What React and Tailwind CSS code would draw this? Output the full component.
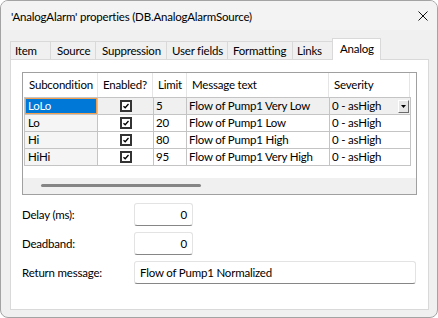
import React from "react";

const rows = [
  { sub: "LoLo", limit: "5", msg: "Flow of Pump1 Very Low" },
  { sub: "Lo", limit: "20", msg: "Flow of Pump1 Low" },
  { sub: "Hi", limit: "80", msg: "Flow of Pump1 High" },
  { sub: "HiHi", limit: "95", msg: "Flow of Pump1 Very High" },
];

function Check() {
  return (
    <div className="flex h-[12px] w-[12px] items-center justify-center border-2 border-[#333333] bg-white">
      <svg width="8" height="8" viewBox="0 0 8 8">
        <path d="M1.5 4.2 L3.2 5.8 L6.5 2" fill="none" stroke="#000" strokeWidth="1.3" />
      </svg>
    </div>
  );
}

function Tab({ label, w, pl }) {
  return (
    <div
      className={`h-[18px] border-l border-t border-[#d9d9d9] bg-[#f0f0f0] leading-[17px] whitespace-nowrap ${w} ${pl}`}
    >
      {label}
    </div>
  );
}

export default function App() {
  return (
    <div className="h-[318px] w-[438px] bg-white font-['Lato',sans-serif] text-[11.5px] tracking-[-0.2px] text-black">
      <div className="flex h-[318px] w-[438px] flex-col overflow-hidden rounded-[8px] border border-[#a3a3a3] bg-[#f0f0f0]">
        {/* title bar */}
        <div className="flex h-[29px] shrink-0 items-center justify-between bg-[#f3f3f3] pl-[10px] pr-[9px] pt-[2px]">
          <span className="whitespace-nowrap">'AnalogAlarm' properties (DB.AnalogAlarmSource)</span>
          <svg width="10" height="10" viewBox="0 0 10 10" className="mb-[2px]">
            <path d="M0.5 0.5 L9.5 9.5 M9.5 0.5 L0.5 9.5" stroke="#111" strokeWidth="1" />
          </svg>
        </div>

        <div className="flex flex-col pl-[9px] pt-[8px]">
          {/* tabs */}
          <div className="flex h-[21px] items-end">
            <Tab label="Item" w="w-[40px]" pl="pl-[4px]" />
            <Tab label="Source" w="w-[45px]" pl="pl-[6px]" />
            <Tab label="Suppression" w="w-[71px]" pl="pl-[6px]" />
            <Tab label="User fields" w="w-[61px]" pl="pl-[5px]" />
            <Tab label="Formatting" w="w-[65px]" pl="pl-[5px]" />
            <Tab label="Links" w="w-[40px]" pl="pl-[4px]" />
            <div className="relative z-10 -mb-[1px] h-[22px] w-[49px] border border-b-0 border-[#d9d9d9] bg-white pl-[7px] leading-[19px]">
              Analog
            </div>
          </div>

          {/* panel */}
          <div className="h-[251px] w-[419px] border border-[#d9d9d9] bg-white pl-[11px] pt-[12px]">
            {/* grid */}
            <div className="flex h-[123px] w-[395px] flex-col border border-[#a0a0a0] bg-white">
              <div className="flex h-[24px] shrink-0 items-center">
                <div className="flex h-full w-[75px] items-center border-r border-[#e5e5e5] pl-[6px]">Subcondition</div>
                <div className="flex h-full w-[55px] items-center border-r border-[#e5e5e5] pl-[5px]">Enabled?</div>
                <div className="flex h-full w-[34px] items-center border-r border-[#e5e5e5] pl-[5px]">Limit</div>
                <div className="flex h-full w-[142px] items-center border-r border-[#e5e5e5] pl-[5px]">Message text</div>
                <div className="flex h-full w-[81px] items-center border-r border-[#e5e5e5] pl-[5px]">Severity</div>
              </div>
              <div className="ml-[1px] w-[387px] border-l border-t border-[#c4c4c4]">
                {rows.map((r, i) => {
                  const sel = i === 0;
                  const rowBg = sel ? "bg-[#f0f0f0]" : "bg-white";
                  return (
                    <div key={r.sub} className="flex h-[17px]">
                      {sel ? (
                        <div className="flex h-[17px] w-[73px] items-center border-b border-r border-[#c4c4c4] bg-[#f0f0f0]">
                          <div className="flex h-[16px] w-[72px] items-center border border-[#f0a050] bg-[#0078d7] pl-[2px] text-white">
                            {r.sub}
                          </div>
                        </div>
                      ) : (
                        <div className="flex h-[17px] w-[73px] items-center border-b border-r border-[#c4c4c4] bg-[#f5f5f5] pl-[3px]">
                          {r.sub}
                        </div>
                      )}
                      <div className={`flex h-[17px] w-[56px] items-center justify-center border-b border-r border-[#c4c4c4] ${rowBg}`}>
                        <Check />
                      </div>
                      <div className={`flex h-[17px] w-[33px] items-center border-b border-r border-[#c4c4c4] pl-[2px] ${rowBg}`}>
                        {r.limit}
                      </div>
                      <div className={`flex h-[17px] w-[143px] items-center border-b border-r border-[#c4c4c4] pl-[2px] whitespace-nowrap ${rowBg}`}>
                        {r.msg}
                      </div>
                      <div className={`flex h-[17px] w-[81px] items-center justify-between border-b border-r border-[#c4c4c4] pl-[2px] whitespace-nowrap ${rowBg}`}>
                        <span>0 - asHigh</span>
                        {sel && (
                          <div className="mr-[1px] flex h-[13px] w-[11px] items-center justify-center border-b border-l border-r border-t border-b-[#6b6b6b] border-l-white border-r-[#6b6b6b] border-t-white bg-[#e6e6e6]">
                            <svg width="5" height="3" viewBox="0 0 5 3">
                              <path d="M0 0 H5 L2.5 3 Z" fill="#000" />
                            </svg>
                          </div>
                        )}
                      </div>
                    </div>
                  );
                })}
              </div>
              <div className="flex-1 bg-white" />
              <div className="h-[16px] shrink-0 bg-[#f0f0f0] pt-[6px]">
                <div className="ml-[18px] h-[3px] w-[160px] rounded-full bg-[#858585]" />
              </div>
            </div>

            {/* fields */}
            <div className="mt-[8px] flex flex-col gap-[6px]">
              <div className="flex h-[23px] items-center">
                <div className="w-[112px]">Delay (ms):</div>
                <div className="flex h-[23px] w-[59px] items-center justify-end rounded-[3px] border border-[#e3e3e3] border-b-[#868686] bg-white pr-[5px]">
                  0
                </div>
              </div>
              <div className="flex h-[23px] items-center">
                <div className="w-[112px]">Deadband:</div>
                <div className="flex h-[23px] w-[59px] items-center justify-end rounded-[3px] border border-[#e3e3e3] border-b-[#868686] bg-white pr-[5px]">
                  0
                </div>
              </div>
              <div className="flex h-[23px] items-center">
                <div className="w-[112px]">Return message:</div>
                <div className="flex h-[23px] w-[282px] items-center rounded-[3px] border border-[#e3e3e3] border-b-[#868686] bg-white pl-[5px] whitespace-nowrap">
                  Flow of Pump1 Normalized
                </div>
              </div>
            </div>
          </div>
        </div>
      </div>
    </div>
  );
}
